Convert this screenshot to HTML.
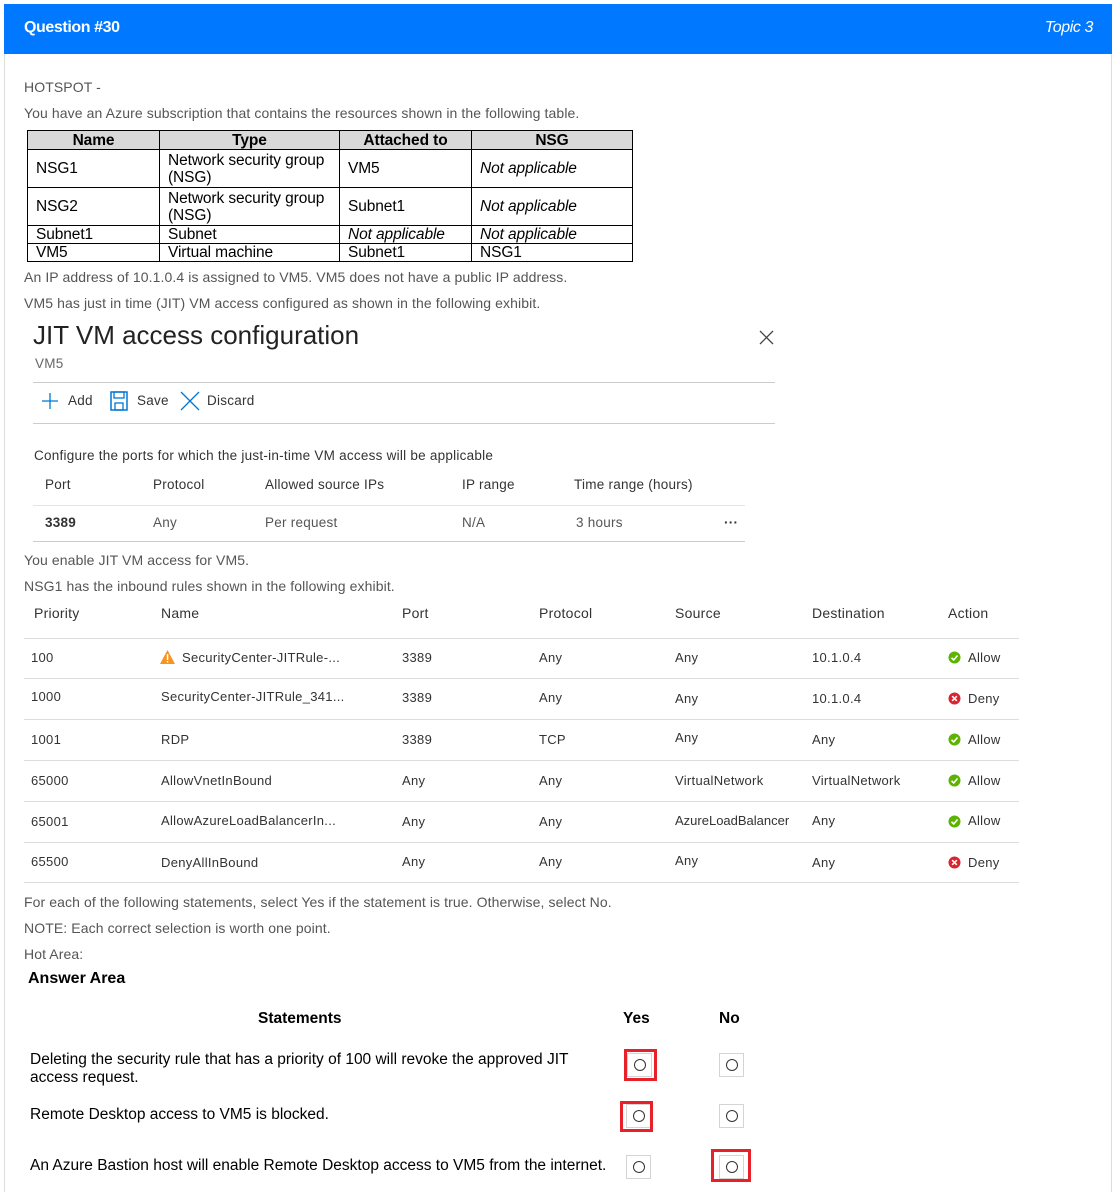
<!DOCTYPE html>
<html><head><meta charset="utf-8">
<style>
*{margin:0;padding:0;box-sizing:border-box}
body{width:1116px;height:1192px;position:relative;background:#fff;font-family:"Liberation Sans",sans-serif;overflow:hidden}
.t{position:absolute;white-space:nowrap;line-height:20px}
.q{font-size:14px;color:#555;letter-spacing:0.1px}
.a{font-size:13.5px;color:#333;letter-spacing:0.25px}
.b{font-size:13px;color:#333;letter-spacing:0.3px}
.h{position:absolute;height:1px;background:#ddd}
.s{font-size:15.5px;color:#000;letter-spacing:0}
.box{position:absolute;width:25px;height:24px;border:1px solid #d4d4d4;background:#fff}
.box::after{content:"";position:absolute;left:6px;top:5px;width:10px;height:10px;border:1.5px solid #333;border-radius:50%}
.red{position:absolute;border:3px solid #e8202a}
table.r{position:absolute;left:27px;top:130px;border-collapse:collapse;font-size:15.5px;letter-spacing:-0.1px;color:#000}
table.r td,table.r th{border:1px solid #000;padding:0 8px;line-height:17px;vertical-align:middle;text-align:left}
table.r th{background:#d9d9d9;text-align:center;font-weight:bold;height:19px}
</style></head><body>
<div style="position:absolute;left:4px;top:4px;width:1108px;height:50px;background:#0078ff"></div>
<div class="t" style="left:24px;top:18px;color:#fff;font-size:16px;font-weight:bold;letter-spacing:-0.4px">Question #30</div>
<div class="t" style="right:23px;top:18px;color:#fff;font-size:16px;font-style:italic;letter-spacing:-0.4px">Topic 3</div>
<div style="position:absolute;left:4px;top:54px;width:1px;height:1138px;background:#ddd"></div>
<div style="position:absolute;left:1111px;top:54px;width:1px;height:1138px;background:#ddd"></div>

<div class="t q" style="left:24px;top:77px">HOTSPOT -</div>
<div class="t q" style="left:24px;top:103px">You have an Azure subscription that contains the resources shown in the following table.</div>

<table class="r">
<tr><th style="width:132px">Name</th><th style="width:180px">Type</th><th style="width:132px">Attached to</th><th style="width:161px">NSG</th></tr>
<tr style="height:38px"><td>NSG1</td><td>Network security group<br>(NSG)</td><td>VM5</td><td><i>Not applicable</i></td></tr>
<tr style="height:38px"><td>NSG2</td><td>Network security group<br>(NSG)</td><td>Subnet1</td><td><i>Not applicable</i></td></tr>
<tr style="height:18px"><td>Subnet1</td><td>Subnet</td><td><i>Not applicable</i></td><td><i>Not applicable</i></td></tr>
<tr style="height:18px"><td>VM5</td><td>Virtual machine</td><td>Subnet1</td><td>NSG1</td></tr>
</table>

<div class="t q" style="left:24px;top:267px">An IP address of 10.1.0.4 is assigned to VM5. VM5 does not have a public IP address.</div>
<div class="t q" style="left:24px;top:293px">VM5 has just in time (JIT) VM access configured as shown in the following exhibit.</div>

<div class="t" style="left:33px;top:319px;font-size:26px;line-height:32px;color:#222">JIT VM access configuration</div>
<svg style="position:absolute;left:759px;top:330px" width="15" height="15"><path d="M1 1L14 14M14 1L1 14" stroke="#444" stroke-width="1.3"/></svg>
<div class="t a" style="left:35px;top:354px;color:#666">VM5</div>
<div class="h" style="left:33px;top:382px;width:742px;background:#ccc"></div>
<svg style="position:absolute;left:41px;top:392px" width="18" height="18"><path d="M9 1V17M1 9H17" stroke="#0078d4" stroke-width="1.3"/></svg>
<div class="t a" style="left:68px;top:391px">Add</div>
<svg style="position:absolute;left:110px;top:391px" width="18" height="20"><rect x="1" y="1" width="16" height="18" fill="none" stroke="#0078d4" stroke-width="1.5"/><rect x="4" y="1" width="10" height="6" fill="none" stroke="#0078d4" stroke-width="1.3"/><rect x="5" y="12" width="8" height="7" fill="none" stroke="#0078d4" stroke-width="1.3"/></svg>
<div class="t a" style="left:137px;top:391px">Save</div>
<svg style="position:absolute;left:180px;top:391px" width="20" height="20"><path d="M1 1L19 19M19 1L1 19" stroke="#0078d4" stroke-width="1.3"/></svg>
<div class="t a" style="left:207px;top:391px">Discard</div>
<div class="h" style="left:33px;top:423px;width:742px;background:#ccc"></div>
<div class="t a" style="left:34px;top:446px">Configure the ports for which the just-in-time VM access will be applicable</div>
<div class="t a" style="left:45px;top:475px">Port</div>
<div class="t a" style="left:153px;top:475px">Protocol</div>
<div class="t a" style="left:265px;top:475px">Allowed source IPs</div>
<div class="t a" style="left:462px;top:475px">IP range</div>
<div class="t a" style="left:574px;top:475px">Time range (hours)</div>
<div class="h" style="left:33px;top:505px;width:712px;background:#e4e4e4"></div>
<div class="t a" style="left:45px;top:513px;font-weight:bold">3389</div>
<div class="t a" style="left:153px;top:513px;color:#555">Any</div>
<div class="t a" style="left:265px;top:513px;color:#555">Per request</div>
<div class="t a" style="left:462px;top:513px;color:#555">N/A</div>
<div class="t a" style="left:576px;top:513px;color:#555">3 hours</div>
<div class="t a" style="left:724px;top:513px;font-weight:bold">···</div>
<div class="h" style="left:33px;top:541px;width:712px;background:#ccc"></div>

<div class="t q" style="left:24px;top:550px">You enable JIT VM access for VM5.</div>
<div class="t q" style="left:24px;top:576px">NSG1 has the inbound rules shown in the following exhibit.</div>

<div class="t a" style="left:34px;top:603px;font-size:14px">Priority</div>
<div class="t a" style="left:161px;top:603px;font-size:14px">Name</div>
<div class="t a" style="left:402px;top:603px;font-size:14px">Port</div>
<div class="t a" style="left:539px;top:603px;font-size:14px">Protocol</div>
<div class="t a" style="left:675px;top:603px;font-size:14px">Source</div>
<div class="t a" style="left:812px;top:603px;font-size:14px">Destination</div>
<div class="t a" style="left:948px;top:603px;font-size:14px">Action</div>
<div class="h" style="left:24px;top:638px;width:995px"></div>
<div class="h" style="left:24px;top:678px;width:995px"></div>
<div class="h" style="left:24px;top:719px;width:995px"></div>
<div class="h" style="left:24px;top:760px;width:995px"></div>
<div class="h" style="left:24px;top:801px;width:995px"></div>
<div class="h" style="left:24px;top:842px;width:995px"></div>
<div class="h" style="left:24px;top:882px;width:995px"></div>

<div class="t b" style="left:31px;top:648px">100</div>
<svg style="position:absolute;left:160px;top:650px" width="15" height="14"><path d="M7.5 0L15 14H0Z" fill="#f7941d"/><rect x="6.8" y="4" width="1.5" height="6" fill="#fff"/><rect x="6.8" y="11" width="1.5" height="1.5" fill="#fff"/></svg>
<div class="t b" style="left:182px;top:648px">SecurityCenter-JITRule-...</div>
<div class="t b" style="left:402px;top:648px">3389</div>
<div class="t b" style="left:539px;top:648px">Any</div>
<div class="t b" style="left:675px;top:648px">Any</div>
<div class="t b" style="left:812px;top:648px">10.1.0.4</div>

<div class="t b" style="left:31px;top:687px">1000</div>
<div class="t b" style="left:161px;top:687px">SecurityCenter-JITRule_341...</div>
<div class="t b" style="left:402px;top:688px">3389</div>
<div class="t b" style="left:539px;top:688px">Any</div>
<div class="t b" style="left:675px;top:689px">Any</div>
<div class="t b" style="left:812px;top:689px">10.1.0.4</div>

<div class="t b" style="left:31px;top:730px">1001</div>
<div class="t b" style="left:161px;top:730px">RDP</div>
<div class="t b" style="left:402px;top:730px">3389</div>
<div class="t b" style="left:539px;top:730px">TCP</div>
<div class="t b" style="left:675px;top:728px">Any</div>
<div class="t b" style="left:812px;top:730px">Any</div>

<div class="t b" style="left:31px;top:771px">65000</div>
<div class="t b" style="left:161px;top:771px">AllowVnetInBound</div>
<div class="t b" style="left:402px;top:771px">Any</div>
<div class="t b" style="left:539px;top:771px">Any</div>
<div class="t b" style="left:675px;top:771px">VirtualNetwork</div>
<div class="t b" style="left:812px;top:771px">VirtualNetwork</div>

<div class="t b" style="left:31px;top:812px">65001</div>
<div class="t b" style="left:161px;top:811px">AllowAzureLoadBalancerIn...</div>
<div class="t b" style="left:402px;top:812px">Any</div>
<div class="t b" style="left:539px;top:812px">Any</div>
<div class="t b" style="left:675px;top:811px;letter-spacing:0">AzureLoadBalancer</div>
<div class="t b" style="left:812px;top:811px">Any</div>

<div class="t b" style="left:31px;top:852px">65500</div>
<div class="t b" style="left:161px;top:853px">DenyAllInBound</div>
<div class="t b" style="left:402px;top:852px">Any</div>
<div class="t b" style="left:539px;top:852px">Any</div>
<div class="t b" style="left:675px;top:851px">Any</div>
<div class="t b" style="left:812px;top:853px">Any</div>

<svg style="position:absolute;left:948px;top:651px" width="13" height="13"><circle cx="6.5" cy="6.5" r="6" fill="#5db300"/><path d="M3.5 6.8L5.7 9L9.5 4.5" stroke="#fff" stroke-width="1.6" fill="none"/></svg>
<div class="t b" style="left:968px;top:648px">Allow</div>
<svg style="position:absolute;left:948px;top:692px" width="13" height="13"><circle cx="6.5" cy="6.5" r="6" fill="#d9252f"/><path d="M4.2 4.2L8.8 8.8M8.8 4.2L4.2 8.8" stroke="#fff" stroke-width="1.6"/></svg>
<div class="t b" style="left:968px;top:689px">Deny</div>
<svg style="position:absolute;left:948px;top:733px" width="13" height="13"><circle cx="6.5" cy="6.5" r="6" fill="#5db300"/><path d="M3.5 6.8L5.7 9L9.5 4.5" stroke="#fff" stroke-width="1.6" fill="none"/></svg>
<div class="t b" style="left:968px;top:730px">Allow</div>
<svg style="position:absolute;left:948px;top:774px" width="13" height="13"><circle cx="6.5" cy="6.5" r="6" fill="#5db300"/><path d="M3.5 6.8L5.7 9L9.5 4.5" stroke="#fff" stroke-width="1.6" fill="none"/></svg>
<div class="t b" style="left:968px;top:771px">Allow</div>
<svg style="position:absolute;left:948px;top:815px" width="13" height="13"><circle cx="6.5" cy="6.5" r="6" fill="#5db300"/><path d="M3.5 6.8L5.7 9L9.5 4.5" stroke="#fff" stroke-width="1.6" fill="none"/></svg>
<div class="t b" style="left:968px;top:811px">Allow</div>
<svg style="position:absolute;left:948px;top:856px" width="13" height="13"><circle cx="6.5" cy="6.5" r="6" fill="#d9252f"/><path d="M4.2 4.2L8.8 8.8M8.8 4.2L4.2 8.8" stroke="#fff" stroke-width="1.6"/></svg>
<div class="t b" style="left:968px;top:853px">Deny</div>

<div class="t q" style="left:24px;top:892px">For each of the following statements, select Yes if the statement is true. Otherwise, select No.</div>
<div class="t q" style="left:24px;top:918px">NOTE: Each correct selection is worth one point.</div>
<div class="t q" style="left:24px;top:944px">Hot Area:</div>

<div class="t s" style="left:28px;top:969px;font-weight:bold;font-size:16px">Answer Area</div>
<div class="t s" style="left:258px;top:1009px;font-weight:bold">Statements</div>
<div class="t s" style="left:623px;top:1009px;font-weight:bold">Yes</div>
<div class="t s" style="left:719px;top:1009px;font-weight:bold">No</div>

<div class="t s" style="left:30px;top:1051px;line-height:18px">Deleting the security rule that has a priority of 100 will revoke the approved JIT<br>access request.</div>
<div class="t s" style="left:30px;top:1105px">Remote Desktop access to VM5 is blocked.</div>
<div class="t s" style="left:30px;top:1156px">An Azure Bastion host will enable Remote Desktop access to VM5 from the internet.</div>

<div class="box" style="left:627px;top:1053px"></div>
<div class="box" style="left:719px;top:1053px"></div>
<div class="box" style="left:626px;top:1104px"></div>
<div class="box" style="left:719px;top:1104px"></div>
<div class="box" style="left:626px;top:1155px"></div>
<div class="box" style="left:719px;top:1155px"></div>
<div class="red" style="left:624px;top:1049px;width:33px;height:32px"></div>
<div class="red" style="left:620px;top:1101px;width:33px;height:31px"></div>
<div class="red" style="left:711px;top:1149px;width:40px;height:33px"></div>
</body></html>
